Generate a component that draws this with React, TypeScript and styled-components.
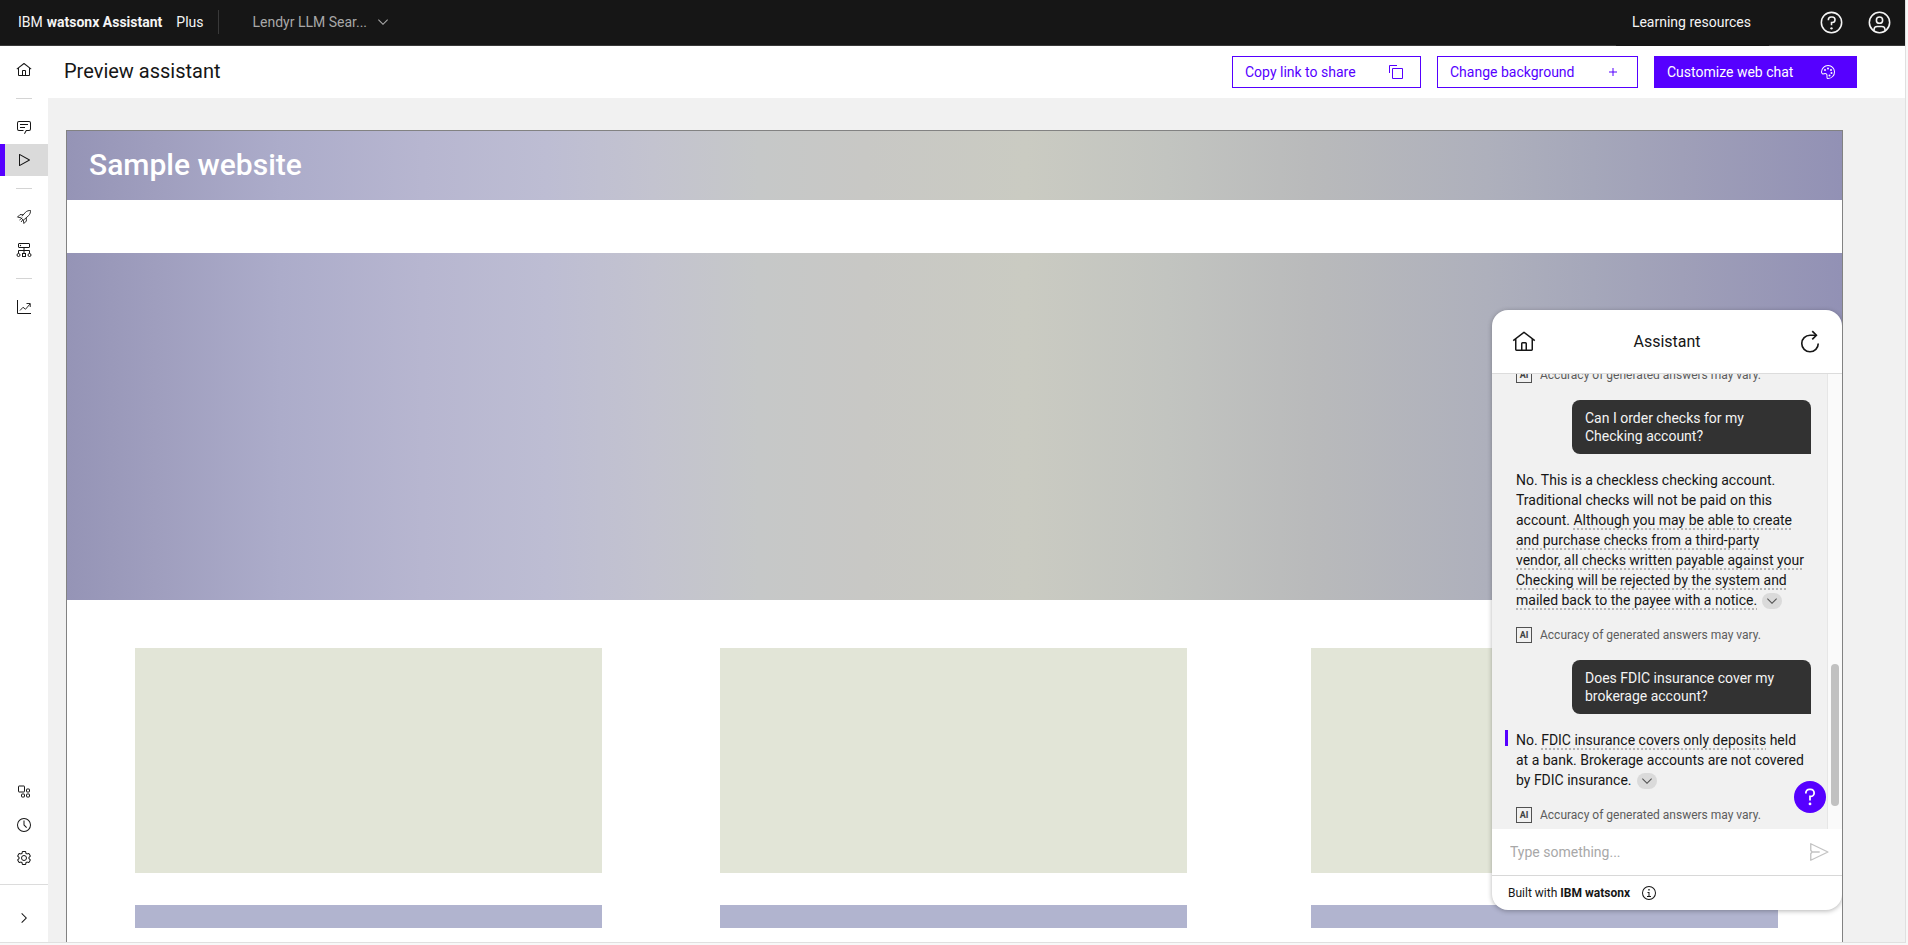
import React from "react";
import styled, { createGlobalStyle, css } from "styled-components";

const purple = "#5600ff";
const ink = "#161616";

const GlobalStyle = createGlobalStyle`
  *, *::before, *::after { box-sizing: border-box; }
  body {
    margin: 0;
    background: #f8f8f8;
    color: ${ink};
    font-family: Roboto, "Liberation Sans", sans-serif;
    font-size: 14px;
  }
  button { font: inherit; color: inherit; background: none; border: 0; padding: 0; cursor: pointer; }
  a { color: inherit; text-decoration: none; }
  h1, h2, p { margin: 0; font-weight: 400; }
`;

/* ---------- icons ---------- */

const Svg = styled.svg<{ $size: number }>`
  display: block;
  flex: none;
  width: ${(p) => p.$size}px;
  height: ${(p) => p.$size}px;
  fill: currentColor;
`;

type IconProps = { size?: number };

const Icon = ({ size = 16, children }: IconProps & { children: React.ReactNode }) => (
  <Svg $size={size} viewBox="0 0 32 32" aria-hidden="true">
    {children}
  </Svg>
);

const HomeIcon = (p: IconProps) => (
  <Icon {...p}>
    <path d="M16.6123,2.2138a1.01,1.01,0,0,0-1.2427,0L1,13.4194l1.2427,1.5717L4,13.6208V26a2.0041,2.0041,0,0,0,2,2H26a2.0037,2.0037,0,0,0,2-2V13.63L29.7573,15,31,13.4282ZM18,26H14V18h4Zm2,0V18a2.0023,2.0023,0,0,0-2-2H14a2.002,2.002,0,0,0-2,2v8H6V12.0615l10-7.79,10,7.8005V26Z" />
  </Icon>
);
const ChevronDownIcon = (p: IconProps) => (
  <Icon {...p}>
    <polygon points="16 22 6 12 7.4 10.6 16 19.2 24.6 10.6 26 12" />
  </Icon>
);
const ChevronRightIcon = (p: IconProps) => (
  <Icon {...p}>
    <polygon points="22 16 12 26 10.6 24.6 19.2 16 10.6 7.4 12 6" />
  </Icon>
);
const HelpIcon = (p: IconProps) => (
  <Icon {...p}>
    <path d="M16,2A14,14,0,1,0,30,16,14,14,0,0,0,16,2Zm0,26A12,12,0,1,1,28,16,12,12,0,0,1,16,28Z" />
    <circle cx="16" cy="23.5" r="1.5" />
    <path d="M17,8H15.5A4.49,4.49,0,0,0,11,12.5V13h2v-.5A2.5,2.5,0,0,1,15.5,10H17a2.5,2.5,0,0,1,0,5H15v4.5h2V17a4.5,4.5,0,0,0,0-9Z" />
  </Icon>
);
const QuestionIcon = (p: IconProps) => (
  <Icon {...p}>
    <circle cx="16" cy="26" r="2" />
    <path
      d="M10,11V10A5,5,0,0,1,15,5H17A5,5,0,0,1,17,15H16V21"
      fill="none"
      stroke="currentColor"
      strokeWidth="2.6"
    />
  </Icon>
);
const UserIcon = (p: IconProps) => (
  <Icon {...p}>
    <path d="M16,8a5,5,0,1,0,5,5A5,5,0,0,0,16,8Zm0,8a3,3,0,1,1,3-3A3.0034,3.0034,0,0,1,16,16Z" />
    <path d="M16,2A14,14,0,1,0,30,16,14.0158,14.0158,0,0,0,16,2ZM10,26.3765V25a3.0033,3.0033,0,0,1,3-3h6a3.0033,3.0033,0,0,1,3,3v1.3765a11.8989,11.8989,0,0,1-12,0Zm13.9925-1.4507A5.0016,5.0016,0,0,0,19,20H13a5.0016,5.0016,0,0,0-4.9925,4.9258,12,12,0,1,1,15.985,0Z" />
  </Icon>
);
const CopyIcon = (p: IconProps) => (
  <Icon {...p}>
    <path d="M28,10V28H10V10H28m0-2H10a2,2,0,0,0-2,2V28a2,2,0,0,0,2,2H28a2,2,0,0,0,2-2V10a2,2,0,0,0-2-2Z" />
    <path d="M4,18H2V4A2,2,0,0,1,4,2H18V4H4Z" />
  </Icon>
);
const AddIcon = (p: IconProps) => (
  <Icon {...p}>
    <polygon points="17 15 17 8 15 8 15 15 8 15 8 17 15 17 15 24 17 24 17 17 24 17 24 15" />
  </Icon>
);
const PaletteIcon = (p: IconProps) => (
  <Icon {...p}>
    <circle cx="10" cy="12" r="2" />
    <circle cx="16" cy="9" r="2" />
    <circle cx="22" cy="12" r="2" />
    <circle cx="23" cy="18" r="2" />
    <circle cx="19" cy="23" r="2" />
    <path d="M16.54,2A14,14,0,0,0,2,16a4.82,4.82,0,0,0,6.09,4.65l1.12-.31A3,3,0,0,1,13,23.24V27a3,3,0,0,0,3,3A14,14,0,0,0,30,15.46,14.05,14.05,0,0,0,16.54,2Zm8.11,22.31A11.93,11.93,0,0,1,16,28a1,1,0,0,1-1-1V23.24a5,5,0,0,0-5-5,5.07,5.07,0,0,0-1.33.18l-1.12.31A2.82,2.82,0,0,1,4,16,12,12,0,0,1,16.47,4,12.18,12.18,0,0,1,28,15.53,11.89,11.89,0,0,1,24.65,24.32Z" />
  </Icon>
);
const ChatIcon = (p: IconProps) => (
  <Icon {...p}>
    <path d="M17.74,30,16,29l4-7h6a2,2,0,0,0,2-2V8a2,2,0,0,0-2-2H6A2,2,0,0,0,4,8V20a2,2,0,0,0,2,2h9v2H6a4,4,0,0,1-4-4V8A4,4,0,0,1,6,4H26a4,4,0,0,1,4,4V20a4,4,0,0,1-4,4H21.16Z" />
    <path d="M8 10H24V12H8zM8 16H18V18H8z" />
  </Icon>
);
const PlayIcon = (p: IconProps) => (
  <Icon {...p}>
    <path d="M7,28a1,1,0,0,1-1-1V5a1,1,0,0,1,1.4819-.8763l20,11a1,1,0,0,1,0,1.7525l-20,11A1.0005,1.0005,0,0,1,7,28ZM8,6.6909V25.3088L24.9248,16Z" />
  </Icon>
);
const RocketIcon = (p: IconProps) => (
  <Icon {...p}>
    <g fill="none" stroke="currentColor" strokeWidth="1.8" strokeLinejoin="round">
      <path d="M12 14.5L19 6.5C22 3.6 25.5 3 29 3C29 6.5 28.4 10 25.5 13L17.5 20" />
      <path d="M14 11.500L8 11.200L3 16.200L9.500 17.300" />
      <path d="M20.500 18L20.800 24L15.800 29L14.700 22.500" />
      <path d="M9.500 17.300L14.700 22.500L17.500 20M7 22L12.500 17.500M10 26L14 21" />
    </g>
  </Icon>
);
const EnvironmentsIcon = (p: IconProps) => (
  <Icon {...p}>
    <g fill="none" stroke="currentColor" strokeWidth="2">
      <rect x="5" y="3" width="22" height="8" rx="1" />
      <path d="M16 11V23M5 23V17H27V23" />
      <circle cx="5" cy="26" r="3" />
      <rect x="13" y="23" width="6" height="6" />
      <circle cx="27" cy="26" r="3" />
    </g>
    <circle cx="9" cy="7" r="1.3" />
  </Icon>
);
const AnalyticsIcon = (p: IconProps) => (
  <Icon {...p}>
    <path d="M4 2H2V28a2 2 0 0 0 2 2H30V28H4Z" />
    <path
      d="M8 23L14 16.5L19 20.5L28 10M21 9H28.5V16"
      fill="none"
      stroke="currentColor"
      strokeWidth="1.8"
    />
  </Icon>
);
const CatalogIcon = (p: IconProps) => (
  <Icon {...p}>
    <g fill="none" stroke="currentColor" strokeWidth="2">
      <rect x="5" y="4" width="12" height="12" rx="1" />
      <rect x="21" y="10" width="6" height="6" rx="1" />
      <rect x="11" y="20" width="6" height="6" rx="1" />
      <rect x="21" y="20" width="6" height="6" rx="1" />
    </g>
  </Icon>
);
const TimeIcon = (p: IconProps) => (
  <Icon {...p}>
    <path d="M16,30A14,14,0,1,1,30,16,14,14,0,0,1,16,30ZM16,4A12,12,0,1,0,28,16,12,12,0,0,0,16,4Z" />
    <polygon points="20.59 22 15 16.41 15 7 17 7 17 15.58 22 20.59" />
  </Icon>
);
const SettingsIcon = (p: IconProps) => (
  <Icon {...p}>
    <path d="M27,16.76c0-.25,0-.5,0-.76s0-.51,0-.77l1.92-1.68A2,2,0,0,0,29.3,11L26.94,7a2,2,0,0,0-1.73-1,2,2,0,0,0-.64.1l-2.43.82a11.35,11.35,0,0,0-1.31-.75l-.51-2.52a2,2,0,0,0-2-1.61H13.64a2,2,0,0,0-2,1.61l-.51,2.52a11.48,11.48,0,0,0-1.32.75L7.43,6.06A2,2,0,0,0,6.79,6,2,2,0,0,0,5.06,7L2.7,11a2,2,0,0,0,.41,2.51L5,15.24c0,.25,0,.5,0,.76s0,.51,0,.77L3.11,18.45A2,2,0,0,0,2.7,21L5.06,25a2,2,0,0,0,1.73,1,2,2,0,0,0,.64-.1l2.43-.82a11.35,11.35,0,0,0,1.31.75l.51,2.52a2,2,0,0,0,2,1.61h4.72a2,2,0,0,0,2-1.61l.51-2.52a11.48,11.48,0,0,0,1.32-.75l2.42.82a2,2,0,0,0,.64.1,2,2,0,0,0,1.73-1L29.3,21a2,2,0,0,0-.41-2.51ZM25.21,24l-3.43-1.16a8.86,8.86,0,0,1-2.71,1.57L18.36,28H13.64l-.71-3.55a9.36,9.36,0,0,1-2.7-1.57L6.79,24,4.43,20l2.72-2.4a8.9,8.9,0,0,1,0-3.13L4.43,12,6.79,8l3.43,1.16a8.86,8.86,0,0,1,2.71-1.57L13.64,4h4.72l.71,3.55a9.36,9.36,0,0,1,2.7,1.57L25.21,8,27.57,12l-2.72,2.4a8.9,8.9,0,0,1,0,3.13L27.57,20Z" />
    <circle cx="16" cy="16" r="5" fill="none" stroke="currentColor" strokeWidth="2" />
  </Icon>
);
const RestartIcon = (p: IconProps) => (
  <Icon {...p}>
    <g fill="none" stroke="currentColor" strokeWidth="2.2">
      <path d="M27 18A11 11 0 1 1 16 7H24" />
      <path d="M19 1.500L24.500 7L19 12.500" />
    </g>
  </Icon>
);
const SendIcon = (p: IconProps) => (
  <Icon {...p}>
    <path
      d="M4 4L29 16L4 28V18.500L6 16L4 13.500ZM6 16H17"
      fill="none"
      stroke="currentColor"
      strokeWidth="2"
      strokeLinejoin="round"
    />
  </Icon>
);
const InfoIcon = (p: IconProps) => (
  <Icon {...p}>
    <path d="M16,2A14,14,0,1,0,30,16,14,14,0,0,0,16,2Zm0,26A12,12,0,1,1,28,16,12,12,0,0,1,16,28Z" />
    <polygon points="17 22 17 14 13 14 13 16 15 16 15 22 12 22 12 24 20 24 20 22" />
    <circle cx="16" cy="9.5" r="1.7" />
  </Icon>
);

/* ---------- page shell ---------- */

const Shell = styled.div`
  display: flex;
  flex-direction: column;
  height: calc(100vh - 2px);
  margin-right: 2px;
  background: #fff;
  border-right: 1px solid #e0e0e0;
  border-bottom: 1px solid #e0e0e0;
  overflow: hidden;
`;

const TopBar = styled.header`
  display: flex;
  flex: none;
  align-items: stretch;
  height: 46px;
  padding: 0 2px 0 18px;
  background: ${ink};
  border-bottom: 1px solid #393939;
  color: #f4f4f4;
`;

const Brand = styled.a`
  display: flex;
  align-items: center;
  gap: 4px;
  padding-bottom: 1px;
`;

const BrandName = styled.b`
  font-weight: 700;
`;

const Plan = styled.span`
  margin-left: 10px;
`;

const TopDivider = styled.span`
  width: 1px;
  margin: 10px 34px 11px 14px;
  background: #393939;
`;

const AssistantPicker = styled.button`
  display: flex;
  align-items: center;
  gap: 8px;
  padding-bottom: 1px;
  color: #a8a8a8;
`;

const TopActions = styled.div`
  display: flex;
  margin-left: auto;
`;

const LearningLink = styled.a`
  display: flex;
  align-items: center;
  height: 46px;
  padding: 0 18px 2px 16px;
  margin-right: 38px;
  background: ${ink};
`;

const TopIconButton = styled.button`
  display: flex;
  align-items: center;
  justify-content: center;
  width: 48px;
`;

const Columns = styled.div`
  display: flex;
  flex: 1;
  min-height: 0;
`;

/* ---------- side navigation ---------- */

const SideNav = styled.nav`
  display: flex;
  flex: none;
  flex-direction: column;
  width: 48px;
  padding: 8px 0;
  background: #fff;
`;

const NavGroup = styled.div`
  display: flex;
  flex-direction: column;
  gap: 1px;
`;

const NavItem = styled.button<{ $active?: boolean }>`
  display: flex;
  align-items: center;
  justify-content: center;
  height: 32px;
  ${(p) =>
    p.$active &&
    css`
      background: #dadada;
      box-shadow: inset 5px 0 0 ${purple};
    `}
`;

const NavDivider = styled.hr`
  width: 16px;
  height: 1px;
  margin: 12px auto;
  border: 0;
  background: #d4d4d4;
`;

const NavFooter = styled.div`
  display: flex;
  flex-direction: column;
  margin-top: 10px;
  padding-top: 17px;
  border-top: 1px solid #dcdcdc;
`;

const Spacer = styled.div`
  flex: 1;
`;

/* ---------- main area ---------- */

const Main = styled.main`
  display: flex;
  flex: 1;
  flex-direction: column;
  min-width: 0;
`;

const PageHeader = styled.div`
  display: flex;
  flex: none;
  align-items: center;
  gap: 16px;
  height: 52px;
  padding: 0 48px 0 16px;
  background: #fff;
`;

const PageTitle = styled.h1`
  flex: 1;
  padding-bottom: 2px;
  font-size: 20px;
  line-height: 28px;
`;

const ActionButton = styled.button<{ $primary?: boolean; $width: number }>`
  display: flex;
  align-items: center;
  justify-content: space-between;
  width: ${(p) => p.$width}px;
  height: 32px;
  padding: 0 ${(p) => (p.$primary ? 20 : 16)}px 0 12px;
  border: 1px solid ${purple};
  background: ${(p) => (p.$primary ? purple : "#fff")};
  color: ${(p) => (p.$primary ? "#fff" : purple)};
`;

const Stage = styled.div`
  display: flex;
  flex: 1;
  min-height: 0;
  padding: 32px 62px 0 18px;
  background: #f1f1f1;
`;

const Frame = styled.section`
  position: relative;
  display: flex;
  flex: 1;
  flex-direction: column;
  border: 1px solid #828282;
  border-bottom: 0;
  background: #fff;
  overflow: hidden;
`;

const wash = css`
  background: linear-gradient(
    90deg,
    #9594b6 0%,
    #9f9ebe 5%,
    #acacca 12%,
    #b7b6d0 20%,
    #bdbdd3 27%,
    #c3c3cf 33%,
    #c6c8c8 39%,
    #c8c8c5 45%,
    #cacbc2 54%,
    #c2c4c0 62%,
    #b9babb 70%,
    #aeb0bc 80%,
    #a5a7ba 86%,
    #9f9fb8 91%,
    #9291b5 100%
  );
`;

const SiteBanner = styled.div`
  ${wash}
  display: flex;
  flex: none;
  align-items: center;
  height: 69px;
  padding: 0 22px 2px;
`;

const SiteTitle = styled.h2`
  color: #fff;
  font-size: 30px;
  line-height: 40px;
  font-weight: 500;
`;

const SiteHero = styled.div`
  ${wash}
  flex: none;
  height: 347px;
  margin-top: 53px;
`;

const CardGrid = styled.div`
  display: grid;
  grid-template-columns: 467fr 118fr 467fr 124fr 467fr;
  padding: 48px 64px 14px 68px;
`;

const Card = styled.div<{ $column: number }>`
  display: grid;
  grid-column: ${(p) => p.$column};
  grid-template-rows: 225px 23px;
  gap: 32px;
`;

const CardImage = styled.div`
  background: #e2e5d7;
`;

const CardCaption = styled.div`
  background: #b1b4cf;
`;

/* ---------- web chat ---------- */

const ChatPanel = styled.aside`
  position: absolute;
  right: 0;
  bottom: 32px;
  display: flex;
  flex-direction: column;
  width: 350px;
  height: 600px;
  border-radius: 16px;
  background: #fff;
  box-shadow: 0 1px 5px rgba(0, 0, 0, 0.3);
  overflow: hidden;
`;

const ChatHeader = styled.div`
  display: flex;
  flex: none;
  align-items: center;
  justify-content: space-between;
  height: 64px;
  padding: 0 20px;
  border-bottom: 1px solid #dcdcdc;
`;

const ChatTitle = styled.h2`
  font-size: 16px;
  line-height: 24px;
`;

const ChatBody = styled.div`
  position: relative;
  display: flex;
  flex: 1;
  min-height: 0;
  background: #f1f1f1;
`;

const Messages = styled.div`
  display: flex;
  flex: 1;
  flex-direction: column;
  justify-content: flex-end;
  min-width: 0;
  padding: 0 16px 6px 24px;
  overflow: hidden;
`;

const ScrollTrack = styled.div`
  display: flex;
  flex: none;
  flex-direction: column;
  justify-content: flex-end;
  align-items: center;
  width: 15px;
  padding-bottom: 23px;
  border-left: 1px solid #e6e6e6;
  background: #fafafa;
`;

const ScrollThumb = styled.div`
  width: 8px;
  height: 142px;
  border-radius: 4px;
  background: #c1c1c1;
`;

const UserBubble = styled.p`
  flex: none;
  align-self: flex-end;
  width: 239px;
  margin: 17px 0 16px;
  padding: 9px 24px 9px 13px;
  border-radius: 8px 8px 0 8px;
  background: #323232;
  color: #f4f4f4;
  line-height: 18px;
`;

const Answer = styled.p<{ $latest?: boolean }>`
  position: relative;
  flex: none;
  padding-right: 5px;
  line-height: 20px;
  ${(p) =>
    p.$latest &&
    css`
      &::before {
        content: "";
        position: absolute;
        left: -11px;
        top: 0;
        width: 3px;
        height: 16px;
        background: ${purple};
      }
    `}
`;

const Cited = styled.span`
  text-decoration: underline dotted #b4b4b4 2px;
  text-underline-offset: 3px;
`;

const Expand = styled.button`
  display: inline-flex;
  align-items: center;
  justify-content: center;
  width: 20px;
  height: 16px;
  margin-left: 5px;
  border-radius: 8px;
  background: #dadada;
  color: #525252;
  vertical-align: middle;
`;

const Disclaimer = styled.div`
  display: flex;
  flex: none;
  align-items: center;
  gap: 8px;
  margin-top: 17px;
  color: #5c5c5c;
  font-size: 12px;
  line-height: 16px;
`;

const AiTag = styled.span`
  width: 16px;
  height: 16px;
  border: 1px solid #525252;
  color: #404040;
  font-size: 9px;
  line-height: 14px;
  font-weight: 700;
  text-align: center;
`;

const HelpBubble = styled.button`
  position: absolute;
  right: 16px;
  bottom: 16px;
  display: flex;
  align-items: center;
  justify-content: center;
  width: 32px;
  height: 32px;
  border-radius: 50%;
  background: ${purple};
  color: #fff;
`;

const InputRow = styled.form`
  display: flex;
  flex: none;
  align-items: center;
  height: 46px;
  padding: 0 12px 0 18px;
`;

const ChatInput = styled.input`
  flex: 1;
  min-width: 0;
  padding: 0;
  border: 0;
  outline: 0;
  background: none;
  font: inherit;
  &::placeholder {
    color: #a8a8a8;
    opacity: 1;
  }
`;

const SendButton = styled.button`
  color: #c4c4c4;
`;

const ChatFooter = styled.div`
  display: flex;
  flex: none;
  align-items: center;
  gap: 11px;
  height: 35px;
  padding: 0 16px;
  border-top: 1px solid #d8d8d8;
  font-size: 12px;
`;

type NavEntry = { label: string; icon: React.ReactNode; active?: boolean };

const navGroups: NavEntry[][] = [
  [{ label: "Home", icon: <HomeIcon /> }],
  [
    { label: "Actions", icon: <ChatIcon /> },
    { label: "Preview", icon: <PlayIcon />, active: true },
  ],
  [
    { label: "Publish", icon: <RocketIcon /> },
    { label: "Environments", icon: <EnvironmentsIcon /> },
  ],
  [{ label: "Analyze", icon: <AnalyticsIcon /> }],
];

const navTools: NavEntry[] = [
  { label: "Integrations", icon: <CatalogIcon /> },
  { label: "Activity log", icon: <TimeIcon /> },
  { label: "Assistant settings", icon: <SettingsIcon /> },
];

const NavItems = ({ items }: { items: NavEntry[] }) => (
  <NavGroup>
    {items.map((item) => (
      <NavItem key={item.label} $active={item.active} aria-label={item.label}>
        {item.icon}
      </NavItem>
    ))}
  </NavGroup>
);

const AccuracyNote = () => (
  <Disclaimer>
    <AiTag>AI</AiTag>
    <span>Accuracy of generated answers may vary.</span>
  </Disclaimer>
);

const ShowSources = () => (
  <Expand aria-label="Show sources">
    <ChevronDownIcon size={16} />
  </Expand>
);

export default function App() {
  return (
    <>
      <GlobalStyle />
      <Shell>
        <TopBar>
          <Brand href="#home">
            <span>IBM</span>
            <BrandName>watsonx Assistant</BrandName>
            <Plan>Plus</Plan>
          </Brand>
          <TopDivider />
          <AssistantPicker>
            <span>Lendyr LLM Sear...</span>
            <ChevronDownIcon />
          </AssistantPicker>
          <TopActions>
            <LearningLink href="#learning">Learning resources</LearningLink>
            <TopIconButton aria-label="Help">
              <HelpIcon size={25} />
            </TopIconButton>
            <TopIconButton aria-label="Account">
              <UserIcon size={25} />
            </TopIconButton>
          </TopActions>
        </TopBar>
        <Columns>
          <SideNav>
            {navGroups.map((group, i) => (
              <React.Fragment key={group[0].label}>
                {i > 0 && <NavDivider />}
                <NavItems items={group} />
              </React.Fragment>
            ))}
            <Spacer />
            <NavItems items={navTools} />
            <NavFooter>
              <NavItem aria-label="Expand navigation">
                <ChevronRightIcon />
              </NavItem>
            </NavFooter>
          </SideNav>
          <Main>
            <PageHeader>
              <PageTitle>Preview assistant</PageTitle>
              <ActionButton $width={189}>
                Copy link to share
                <CopyIcon />
              </ActionButton>
              <ActionButton $width={201}>
                Change background
                <AddIcon />
              </ActionButton>
              <ActionButton $primary $width={203}>
                Customize web chat
                <PaletteIcon />
              </ActionButton>
            </PageHeader>
            <Stage>
              <Frame>
                <SiteBanner>
                  <SiteTitle>Sample website</SiteTitle>
                </SiteBanner>
                <SiteHero />
                <CardGrid>
                  {[1, 3, 5].map((column) => (
                    <Card key={column} $column={column}>
                      <CardImage />
                      <CardCaption />
                    </Card>
                  ))}
                </CardGrid>
                <ChatPanel>
                  <ChatHeader>
                    <HomeIcon size={24} />
                    <ChatTitle>Assistant</ChatTitle>
                    <RestartIcon size={24} />
                  </ChatHeader>
                  <ChatBody>
                    <Messages>
                      <AccuracyNote />
                      <UserBubble>Can I order checks for my Checking account?</UserBubble>
                      <Answer>
                        No. This is a checkless checking account. Traditional checks will not be
                        paid on this account.{" "}
                        <Cited>
                          Although you may be able to create and purchase checks from a third-party
                          vendor, all checks written payable against your Checking will be rejected
                          by the system and mailed back to the payee with a notice.
                        </Cited>
                        <ShowSources />
                      </Answer>
                      <AccuracyNote />
                      <UserBubble>Does FDIC insurance cover my brokerage account?</UserBubble>
                      <Answer $latest>
                        No. <Cited>FDIC insurance covers only deposits</Cited> held at a bank.
                        Brokerage accounts are not covered by FDIC insurance.
                        <ShowSources />
                      </Answer>
                      <AccuracyNote />
                    </Messages>
                    <ScrollTrack>
                      <ScrollThumb />
                    </ScrollTrack>
                    <HelpBubble aria-label="Get help">
                      <QuestionIcon size={22} />
                    </HelpBubble>
                  </ChatBody>
                  <InputRow>
                    <ChatInput aria-label="Message" placeholder="Type something..." />
                    <SendButton type="button" aria-label="Send">
                      <SendIcon size={22} />
                    </SendButton>
                  </InputRow>
                  <ChatFooter>
                    <span>
                      Built with <b>IBM watsonx</b>
                    </span>
                    <InfoIcon />
                  </ChatFooter>
                </ChatPanel>
              </Frame>
            </Stage>
          </Main>
        </Columns>
      </Shell>
    </>
  );
}
